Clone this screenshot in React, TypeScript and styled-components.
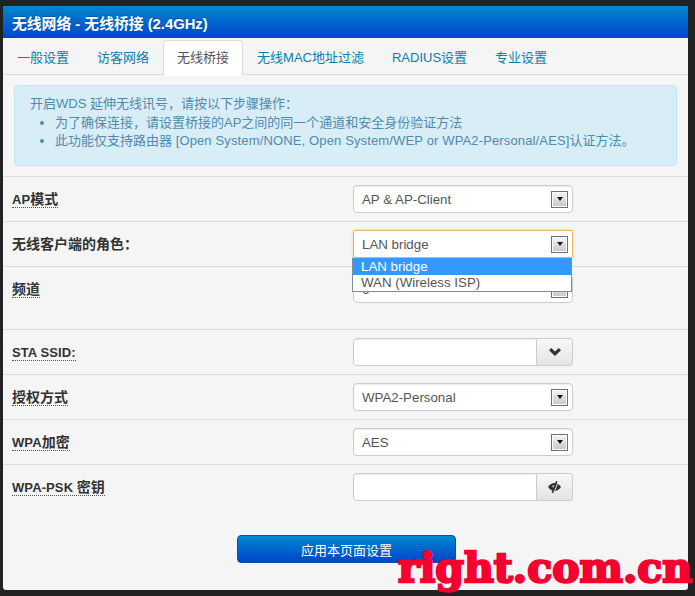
import React from 'react'
import styled, { createGlobalStyle } from 'styled-components'

const GlobalStyle = createGlobalStyle`
  html, body {
    margin: 0;
    padding: 0;
    background: #222222;
  }
  body {
    font-family: "Liberation Sans", "Noto Sans CJK SC", sans-serif;
    font-size: 13px;
    color: #555555;
  }
`

const Page = styled.div`
  width: 695px;
  height: 596px;
  box-sizing: border-box;
  padding: 6px 7px 6px 3px;
  position: relative;
  overflow: hidden;
`

const Panel = styled.div`
  height: 584px;
  background: #f5f5f5;
  border-radius: 3px;
  overflow: hidden;
`

const Header = styled.div`
  height: 32px;
  box-sizing: border-box;
  padding: 0 9px;
  display: flex;
  align-items: center;
  background: linear-gradient(to bottom, #0088cc, #0044cc);
  color: #ffffff;
  font-size: 14.8px;
  font-weight: bold;
  text-shadow: 0 -1px 0 rgba(0, 0, 0, 0.25);
`

const Tabs = styled.div`
  height: 37px;
  box-sizing: border-box;
  border-bottom: 1px solid #dddddd;
  padding: 2px 0 0 0;
  display: flex;
`

const Tab = styled.div<{ $active?: boolean }>`
  height: 36px;
  box-sizing: border-box;
  padding: 0 13px;
  line-height: 33px;
  font-size: 13px;
  white-space: nowrap;
  color: ${p => (p.$active ? '#555555' : '#0f7ea8')};
  background: ${p => (p.$active ? '#ffffff' : 'transparent')};
  border-radius: 4px 4px 0 0;
  border: 1px solid ${p => (p.$active ? '#dddddd' : 'transparent')};
  border-bottom-color: ${p => (p.$active ? '#ffffff' : 'transparent')};
`

const Alert = styled.div`
  margin: 10px 11px;
  height: 81px;
  box-sizing: border-box;
  padding: 9px 15px 0;
  background: #d9edf7;
  border: 1px solid #bce8f1;
  border-radius: 4px;
  color: #4f8bb0;
  font-size: 13px;
  line-height: 18px;
`

const AlertList = styled.ul`
  margin: 1px 0 0;
  padding: 0 0 0 25px;
`

const WideText = styled.span`
  letter-spacing: 0.14px;
`

const Row = styled.div<{ $tall?: boolean }>`
  height: ${p => (p.$tall ? 63 : 45)}px;
  box-sizing: border-box;
  border-top: 1px solid #dddddd;
  padding: 8px 115px 0 9px;
  display: flex;
  justify-content: space-between;
`

const Label = styled.span<{ $plain?: boolean }>`
  align-self: flex-start;
  margin-top: 7px;
  font-size: 14px;
  line-height: 15px;
  font-weight: bold;
  color: #333333;
  border-bottom: ${p => (p.$plain ? 'none' : '1px dotted #555555')};
`

const LabelLatin = styled.span`
  font-size: 13px;
  letter-spacing: 0.1px;
`

const Field = styled.div`
  position: relative;
  width: 220px;
  height: 28px;
`

const SelectBox = styled.div<{ $focus?: boolean }>`
  height: 28px;
  box-sizing: border-box;
  padding: 0 8px;
  display: flex;
  align-items: center;
  justify-content: space-between;
  background: #ffffff;
  border: 1px solid ${p => (p.$focus ? '#e3b769' : '#cccccc')};
  border-radius: ${p => (p.$focus ? '2px' : '4px')};
  box-shadow: ${p => (p.$focus ? '0 0 3px rgba(230, 180, 90, 0.5)' : 'inset 0 1px 1px rgba(0, 0, 0, 0.075)')};
  font-size: 13.3px;
  color: #555555;
`

const SelectArrow = styled.span`
  width: 17px;
  height: 17px;
  margin-right: -4px;
  box-sizing: border-box;
  border: 1px solid #707070;
  background: linear-gradient(to bottom, #f6f6f6, #c6c6c6);
  box-shadow: inset 0 0 0 1px #ffffff;
  display: flex;
  align-items: center;
  justify-content: center;

  &::after {
    content: '';
    border-left: 3.5px solid transparent;
    border-right: 3.5px solid transparent;
    border-top: 4px solid #111111;
  }
`

const Options = styled.div`
  position: absolute;
  left: -1px;
  top: 28px;
  width: 220px;
  box-sizing: border-box;
  background: #ffffff;
  border: 1px solid #7f8c9c;
  border-top: none;
  z-index: 2;
`

const Option = styled.div<{ $selected?: boolean }>`
  height: ${p => (p.$selected ? 17 : 16)}px;
  line-height: ${p => (p.$selected ? 18 : 16)}px;
  padding-left: 8px;
  font-size: 13.3px;
  background: ${p => (p.$selected ? '#3399ff' : '#ffffff')};
  color: ${p => (p.$selected ? '#ffffff' : '#555555')};
`

const InputGroup = styled.div`
  height: 28px;
  display: flex;
`

const Input = styled.div`
  flex: 1;
  box-sizing: border-box;
  background: #ffffff;
  border: 1px solid #cccccc;
  border-radius: 4px 0 0 4px;
  box-shadow: inset 0 1px 1px rgba(0, 0, 0, 0.075);
`

const AddOn = styled.div`
  width: 36px;
  box-sizing: border-box;
  display: flex;
  align-items: center;
  justify-content: center;
  background: linear-gradient(to bottom, #f8f8f8, #e4e4e4);
  border: 1px solid #cccccc;
  border-left: none;
  border-radius: 0 4px 4px 0;
  color: #333333;
`

const Footer = styled.div`
  display: flex;
  justify-content: center;
  padding: 26px 0 0 0;
`

const ApplyButton = styled.button`
  width: 219px;
  height: 28px;
  margin-left: 2px;
  padding: 0;
  background: linear-gradient(to bottom, #0088cc, #0044cc);
  border: 1px solid #0055aa;
  border-radius: 4px;
  color: #ffffff;
  font-family: inherit;
  font-size: 13px;
`

const Watermark = styled.div`
  position: absolute;
  left: 398px;
  top: 543px;
  font-family: "DejaVu Serif", serif;
  font-weight: bold;
  font-size: 41px;
  line-height: 50px;
  letter-spacing: 0.05px;
  white-space: nowrap;
  color: #f5002f;
  -webkit-text-stroke: 2.4px #f5002f;
`

const tabs = ['一般设置', '访客网络', '无线桥接', '无线MAC地址过滤', 'RADIUS设置', '专业设置']

const ChevronIcon = () => (
  <svg width="12" height="8" viewBox="0 0 12 8" fill="#333333">
    <path d="M0 2.2 2.2 0 6 3.6 9.8 0 12 2.2 6 8z" />
  </svg>
)

const EyeOffIcon = () => (
  <svg width="13" height="12" viewBox="0 0 13 12">
    <path d="M0 6C1.8 3.4 4 2 6.5 2S11.2 3.4 13 6c-1.8 2.6-4 4-6.5 4S1.8 8.6 0 6z" fill="#333333" />
    <circle cx="5.4" cy="5.4" r="1.1" fill="#cfcfcf" />
    <path d="M9.2 .6 5 11.6" stroke="#ececec" strokeWidth="1" transform="translate(1 0)" />
    <path d="M8.8 0 4.4 12" stroke="#333333" strokeWidth="1.5" />
  </svg>
)

const Select = ({ value }: { value: string }) => (
  <Field>
    <SelectBox>
      {value}
      <SelectArrow />
    </SelectBox>
  </Field>
)

export default function App() {
  return (
    <Page>
      <GlobalStyle />
      <Panel>
        <Header>无线网络 - 无线桥接 (2.4GHz)</Header>
        <Tabs>
          {tabs.map(t => (
            <Tab key={t} $active={t === '无线桥接'}>{t}</Tab>
          ))}
        </Tabs>
        <Alert>
          开启WDS 延伸无线讯号，请按以下步骤操作：
          <AlertList>
            <li>为了确保连接，请设置桥接的AP之间的同一个通道和安全身份验证方法</li>
            <li>此功能仅支持路由器 <WideText>[Open System/NONE, Open System/WEP or WPA2-Personal/AES]</WideText>认证方法。</li>
          </AlertList>
        </Alert>
        <Row>
          <Label><LabelLatin>AP</LabelLatin>模式</Label>
          <Select value="AP &amp; AP-Client" />
        </Row>
        <Row>
          <Label $plain>无线客户端的角色：</Label>
          <Field>
            <SelectBox $focus>
              LAN bridge
              <SelectArrow />
            </SelectBox>
            <Options>
              <Option $selected>LAN bridge</Option>
              <Option>WAN (Wireless ISP)</Option>
            </Options>
          </Field>
        </Row>
        <Row $tall>
          <Label>频道</Label>
          <Select value="6" />
        </Row>
        <Row>
          <Label><LabelLatin>STA SSID:</LabelLatin></Label>
          <Field>
            <InputGroup>
              <Input />
              <AddOn><ChevronIcon /></AddOn>
            </InputGroup>
          </Field>
        </Row>
        <Row>
          <Label>授权方式</Label>
          <Select value="WPA2-Personal" />
        </Row>
        <Row>
          <Label><LabelLatin>WPA</LabelLatin>加密</Label>
          <Select value="AES" />
        </Row>
        <Row>
          <Label><LabelLatin>WPA-PSK </LabelLatin>密钥</Label>
          <Field>
            <InputGroup>
              <Input />
              <AddOn><EyeOffIcon /></AddOn>
            </InputGroup>
          </Field>
        </Row>
        <Footer>
          <ApplyButton>应用本页面设置</ApplyButton>
        </Footer>
      </Panel>
      <Watermark>right.com.cn</Watermark>
    </Page>
  )
}
